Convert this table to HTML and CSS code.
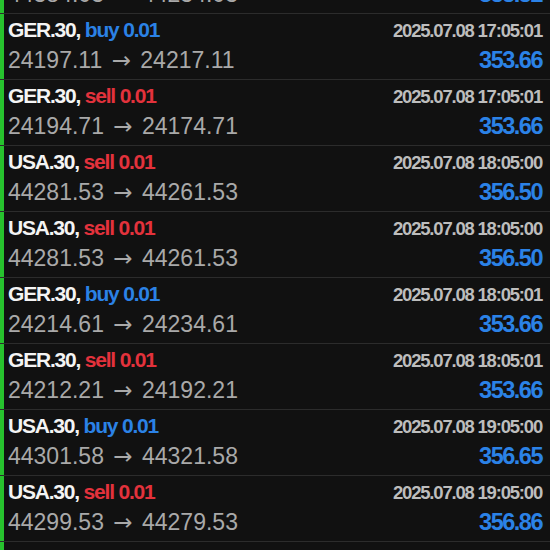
FILE: index.html
```html
<!DOCTYPE html>
<html>
<head>
<meta charset="utf-8">
<link rel="stylesheet" href="styles.css">
</head>
<body>
<div class="list">
  <div class="row"><div class="inner">
    <div class="line1"><span class="title">USA.30, <span class="buy">buy 0.01</span></span><span class="time">2025.07.08 16:05:00</span></div>
    <div class="line2"><span class="price">44384.03 <span class="arrow">→</span> 44234.03</span><span class="value">355.52</span></div>
  </div></div>
  <div class="row"><div class="inner">
    <div class="line1"><span class="title">GER.30, <span class="buy">buy 0.01</span></span><span class="time">2025.07.08 17:05:01</span></div>
    <div class="line2"><span class="price">24197.11 <span class="arrow">→</span> 24217.11</span><span class="value">353.66</span></div>
  </div></div>
  <div class="row"><div class="inner">
    <div class="line1"><span class="title">GER.30, <span class="sell">sell 0.01</span></span><span class="time">2025.07.08 17:05:01</span></div>
    <div class="line2"><span class="price">24194.71 <span class="arrow">→</span> 24174.71</span><span class="value">353.66</span></div>
  </div></div>
  <div class="row"><div class="inner">
    <div class="line1"><span class="title">USA.30, <span class="sell">sell 0.01</span></span><span class="time">2025.07.08 18:05:00</span></div>
    <div class="line2"><span class="price">44281.53 <span class="arrow">→</span> 44261.53</span><span class="value">356.50</span></div>
  </div></div>
  <div class="row"><div class="inner">
    <div class="line1"><span class="title">USA.30, <span class="sell">sell 0.01</span></span><span class="time">2025.07.08 18:05:00</span></div>
    <div class="line2"><span class="price">44281.53 <span class="arrow">→</span> 44261.53</span><span class="value">356.50</span></div>
  </div></div>
  <div class="row"><div class="inner">
    <div class="line1"><span class="title">GER.30, <span class="buy">buy 0.01</span></span><span class="time">2025.07.08 18:05:01</span></div>
    <div class="line2"><span class="price">24214.61 <span class="arrow">→</span> 24234.61</span><span class="value">353.66</span></div>
  </div></div>
  <div class="row"><div class="inner">
    <div class="line1"><span class="title">GER.30, <span class="sell">sell 0.01</span></span><span class="time">2025.07.08 18:05:01</span></div>
    <div class="line2"><span class="price">24212.21 <span class="arrow">→</span> 24192.21</span><span class="value">353.66</span></div>
  </div></div>
  <div class="row"><div class="inner">
    <div class="line1"><span class="title">USA.30, <span class="buy">buy 0.01</span></span><span class="time">2025.07.08 19:05:00</span></div>
    <div class="line2"><span class="price">44301.58 <span class="arrow">→</span> 44321.58</span><span class="value">356.65</span></div>
  </div></div>
  <div class="row"><div class="inner">
    <div class="line1"><span class="title">USA.30, <span class="sell">sell 0.01</span></span><span class="time">2025.07.08 19:05:00</span></div>
    <div class="line2"><span class="price">44299.53 <span class="arrow">→</span> 44279.53</span><span class="value">356.86</span></div>
  </div></div>
  <div class="row"><div class="inner">
    <div class="line1"><span class="title">GER.30, <span class="buy">buy 0.01</span></span><span class="time">2025.07.08 19:05:01</span></div>
    <div class="line2"><span class="price">24230.11 <span class="arrow">→</span> 24250.11</span><span class="value">353.66</span></div>
  </div></div>
</div>
</body>
</html>
```

FILE: styles.css
```css
html, body {
  margin: 0;
  padding: 0;
  background: #111111;
  overflow: hidden;
  height: 550px;
}
body {
  font-family: "Liberation Sans", Arial, sans-serif;
}
.list {
  margin-top: -52px;
}
.row {
  border-bottom: 1px solid #2c2c2c;
}
.inner {
  border-left: 4px solid #27c22e;
  padding: 4px 8px 4px 4px;
  height: 57px;
}
.line1, .line2 {
  display: flex;
  justify-content: space-between;
  align-items: baseline;
}
.line1 {
  height: 24px;
  line-height: 24px;
}
.line2 {
  height: 30px;
  line-height: 30px;
  margin-top: 3px;
}
.title {
  font-size: 21px;
  font-weight: bold;
  color: #f4f4f4;
  letter-spacing: -1.2px;
}
.buy, .value {
  color: #2b82e6;
}
.sell {
  color: #e3323c;
}
.time {
  font-size: 18.5px;
  font-weight: bold;
  color: #bdbdbd;
  letter-spacing: -1.2px;
}
.price {
  font-size: 23px;
  color: #a9a9a9;
}
.arrow {
  font-family: "DejaVu Sans", sans-serif;
  font-size: 23px;
  margin: 0 3px;
}
.value {
  font-size: 23.5px;
  font-weight: bold;
  letter-spacing: -1.5px;
}
```
